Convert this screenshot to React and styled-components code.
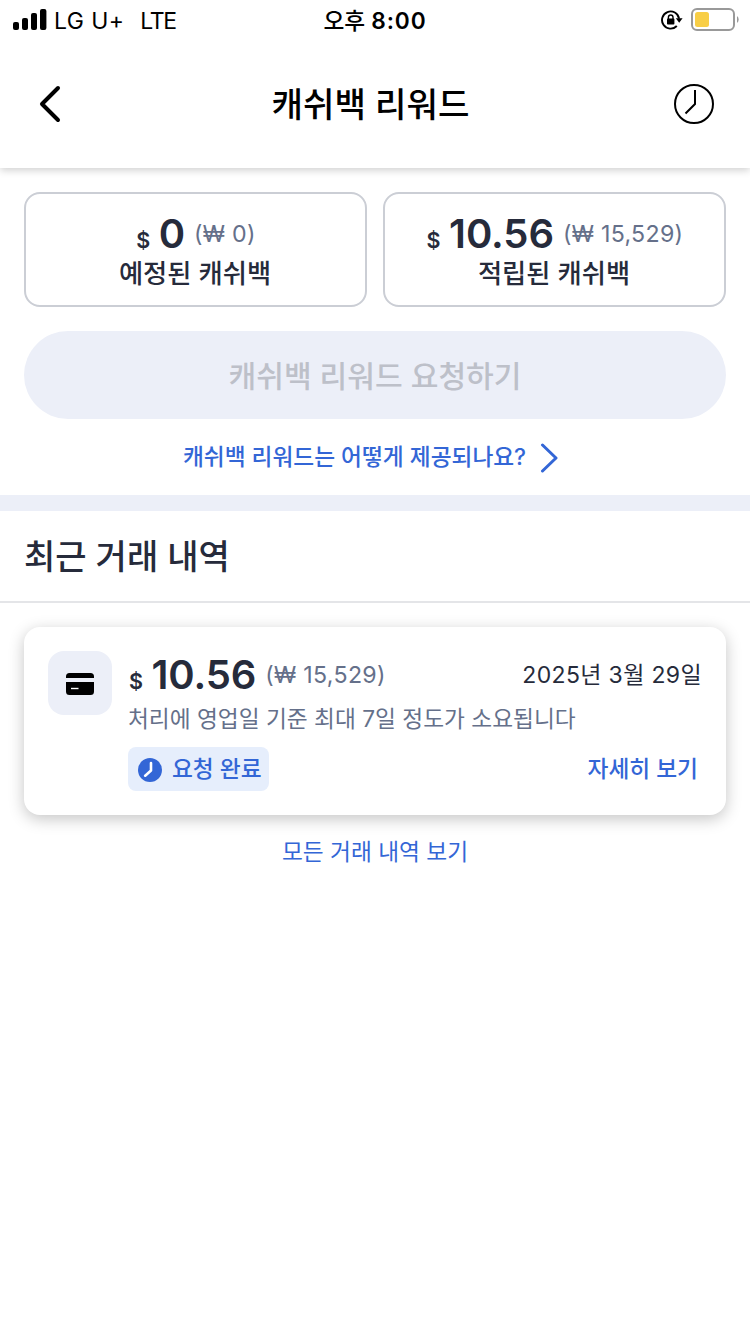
import React from 'react';
import styled, { createGlobalStyle } from 'styled-components';

function App() {
	return (
		<Page>
			<GlobalStyle />

			<StatusBar>
				<Carrier>
					<svg width="34" height="22" viewBox="0 0 34 22">
						<rect x="0" y="13" width="6" height="8" rx="2" />
						<rect x="9" y="9" width="6" height="12" rx="2" />
						<rect x="18" y="4" width="6" height="17" rx="2" />
						<rect x="27" y="0" width="6.4" height="21" rx="2" />
					</svg>
					<span>LG U+</span>
					<span className="network">LTE</span>
				</Carrier>
				<Time>
					오후 <b>8:00</b>
				</Time>
				<Indicators>
					<LockIcon />
					<BatteryIcon />
				</Indicators>
			</StatusBar>

			<Header>
				<IconButton aria-label="뒤로">
					<svg width="24" height="38" viewBox="0 0 24 38">
						<path
							d="M20 3L4 19L20 35"
							fill="none"
							stroke="#000"
							strokeWidth="4"
							strokeLinecap="round"
							strokeLinejoin="round"
						/>
					</svg>
				</IconButton>
				<h1>캐쉬백 리워드</h1>
				<IconButton aria-label="내역">
					<svg width="40" height="40" viewBox="0 0 40 40">
						<g fill="none" stroke="#000" strokeWidth="2">
							<circle cx="20" cy="20" r="19" />
							<path d="M21 6V20L11.5 29.5" />
						</g>
					</svg>
				</IconButton>
			</Header>

			<Summary>
				<Balances>
					<BalanceBox>
						<Amount usd="0" krw="0" />
						<p>예정된 캐쉬백</p>
					</BalanceBox>
					<BalanceBox>
						<Amount usd="10.56" krw="15,529" />
						<p>적립된 캐쉬백</p>
					</BalanceBox>
				</Balances>
				<RequestButton disabled>캐쉬백 리워드 요청하기</RequestButton>
				<HelpLink href="#">
					<span>캐쉬백 리워드는 어떻게 제공되나요?</span>
					<svg width="18" height="30" viewBox="0 0 18 30">
						<path
							d="M2.5 2L16 15L2.5 28"
							fill="none"
							stroke="#3366d6"
							strokeWidth="3"
							strokeLinecap="round"
							strokeLinejoin="round"
						/>
					</svg>
				</HelpLink>
			</Summary>

			<SectionTitle>최근 거래 내역</SectionTitle>

			<Transaction>
				<CardIcon>
					<svg width="28" height="22" viewBox="0 0 28 22">
						<path d="M0 5V3.5A3.5 3.5 0 0 1 3.5 0H24.5A3.5 3.5 0 0 1 28 3.5V5Z" />
						<path d="M0 9H28V18.5A3.5 3.5 0 0 1 24.5 22H3.5A3.5 3.5 0 0 1 0 18.5Z" />
						<path d="M5 15.5H12.5" stroke="#fff" strokeWidth="1.4" />
					</svg>
				</CardIcon>
				<Details>
					<Row>
						<Amount usd="10.56" krw="15,529" />
						<TransactionDate>2025년 3월 29일</TransactionDate>
					</Row>
					<Note>처리에 영업일 기준 최대 7일 정도가 소요됩니다</Note>
					<Row>
						<Badge>
							<svg width="24" height="24" viewBox="0 0 24 24">
								<circle cx="12" cy="12" r="12" fill="#3366d6" />
								<path
									d="M13 5V12.5L7.2 17.7"
									fill="none"
									stroke="#fff"
									strokeWidth="2.6"
									strokeLinecap="round"
									strokeLinejoin="round"
								/>
							</svg>
							<span>요청 완료</span>
						</Badge>
						<MoreLink href="#">자세히 보기</MoreLink>
					</Row>
				</Details>
			</Transaction>

			<AllLink href="#">모든 거래 내역 보기</AllLink>
		</Page>
	);
}

export default App;

function Amount({ usd, krw }) {
	return (
		<AmountLine>
			<span className="sign">$</span>
			<span className="usd">{usd}</span>
			<span className="krw">(₩ {krw})</span>
		</AmountLine>
	);
}

function LockIcon() {
	return (
		<svg width="22" height="20" viewBox="0 0 22 20">
			<path
				d="M15.8 16A8.6 8.6 0 1 1 18.1 8.6"
				fill="none"
				stroke="#000"
				strokeWidth="1.9"
			/>
			<path d="M14.8 8.2H21.6L18.2 12.8Z" />
			<rect x="6" y="8.6" width="7.4" height="6" rx="0.8" />
			<path
				d="M7.4 9V7.3A2.3 2.3 0 0 1 12 7.3V9"
				fill="none"
				stroke="#000"
				strokeWidth="1.4"
			/>
		</svg>
	);
}

function BatteryIcon() {
	return (
		<svg width="48" height="24" viewBox="0 0 48 24">
			<rect
				x="1"
				y="1"
				width="42"
				height="21"
				rx="5"
				fill="none"
				stroke="#999"
				strokeWidth="2"
			/>
			<rect x="4" y="4" width="14" height="15" rx="2.5" fill="#f8ce46" />
			<path d="M46 8A4.5 4.5 0 0 1 46 15Z" fill="#999" />
		</svg>
	);
}

const GlobalStyle = createGlobalStyle`
	* {
		box-sizing: border-box;
	}
	body {
		margin: 0;
		background: #fff;
		color: #262b3b;
		font-family: Inter, 'Noto Sans CJK KR', sans-serif;
	}
	h1, h2, p {
		margin: 0;
	}
	a {
		color: #3366d6;
		text-decoration: none;
	}
	svg {
		display: block;
		flex-shrink: 0;
	}
`;

const Page = styled.div`
	width: 750px;
	min-height: 1334px;
	background: #fff;
`;

const StatusBar = styled.div`
	display: grid;
	grid-template-columns: 1fr auto 1fr;
	height: 40px;
	padding: 0 11px 0 13px;
	color: #000;
`;

const Carrier = styled.div`
	display: flex;
	height: 40px;
	padding-top: 9px;
	font-size: 23px;
	letter-spacing: 0.4px;
	line-height: 24px;
	white-space: nowrap;
	svg {
		margin-right: 7px;
	}
	.network {
		margin-left: 16px;
		letter-spacing: -1.4px;
	}
`;

const Time = styled.div`
	margin-left: -2px;
	padding-top: 9px;
	font-size: 22.7px;
	font-weight: 500;
	line-height: 24px;
	b {
		font-weight: 600;
		letter-spacing: 0.9px;
	}
`;

const Indicators = styled.div`
	display: flex;
	justify-content: flex-end;
	padding-top: 8px;
	svg:first-child {
		margin: 2px 8px 0 0;
	}
`;

const Header = styled.header`
	display: flex;
	align-items: center;
	justify-content: space-between;
	height: 128px;
	padding: 0 36px 0 38px;
	color: #000;
	box-shadow: 0 2px 8px rgba(0, 0, 0, 0.2);
	clip-path: inset(0 0 -16px 0);
	h1 {
		margin-left: -11px;
		padding-top: 1px;
		font-size: 34.2px;
		font-weight: 500;
		line-height: 48px;
	}
`;

const IconButton = styled.button`
	display: flex;
	align-items: center;
	width: 40px;
	height: 40px;
	padding: 0;
	border: 0;
	background: none;
`;

const Summary = styled.section`
	height: 343px;
	padding: 24px 24px 0;
	border-bottom: 16px solid #eceff8;
`;

const Balances = styled.div`
	display: grid;
	grid-template-columns: 1fr 1fr;
	gap: 16px;
`;

const BalanceBox = styled.div`
	display: flex;
	flex-direction: column;
	align-items: center;
	height: 115px;
	padding-top: 16px;
	border: 2px solid #cbced5;
	border-radius: 16px;
	p {
		margin-left: -1px;
		font-size: 26.3px;
		font-weight: 500;
		line-height: 32px;
	}
`;

const AmountLine = styled.div`
	display: flex;
	align-items: baseline;
	height: 48px;
	line-height: 48px;
	white-space: nowrap;
	.sign {
		margin: 0 8.5px 0 1px;
		font-size: 21.5px;
		font-weight: 600;
	}
	.usd {
		margin-right: 9px;
		font-size: 40px;
		font-weight: 600;
		letter-spacing: -0.1px;
	}
	.krw {
		position: relative;
		top: -6px;
		font-size: 23.2px;
		letter-spacing: 0.3px;
		color: #65708a;
	}
`;

const RequestButton = styled.button`
	display: block;
	width: 100%;
	height: 88px;
	margin-top: 24px;
	padding: 0 0 3px;
	border: 0;
	border-radius: 44px;
	background: #eceff8;
	color: #bdc0c9;
	font-family: inherit;
	font-size: 30.1px;
	font-weight: 500;
`;

const HelpLink = styled.a`
	display: flex;
	align-items: center;
	justify-content: center;
	gap: 14px;
	height: 76px;
	padding: 1px 9px 0 0;
	font-size: 22.7px;
	font-weight: 500;
	span {
		padding-bottom: 5px;
	}
`;

const SectionTitle = styled.h2`
	height: 92px;
	padding-left: 24px;
	border-bottom: 2px solid #e4e5e8;
	font-size: 34px;
	font-weight: 500;
	line-height: 91px;
`;

const Transaction = styled.article`
	display: flex;
	height: 188px;
	margin: 24px 24px 0;
	padding: 24px;
	border-radius: 16px;
	background: #fff;
	box-shadow: 0 4px 16px rgba(0, 0, 0, 0.23);
`;

const CardIcon = styled.div`
	display: flex;
	align-items: center;
	justify-content: center;
	width: 64px;
	height: 64px;
	margin-right: 16px;
	padding-top: 2px;
	border-radius: 16px;
	background: #eceff8;
`;

const Details = styled.div`
	flex: 1;
`;

const Row = styled.div`
	display: flex;
	justify-content: space-between;
`;

const TransactionDate = styled.span`
	font-size: 23px;
	letter-spacing: 0.35px;
	line-height: 48px;
`;

const Note = styled.p`
	height: 48px;
	color: #65708a;
	font-size: 22.7px;
	line-height: 40px;
`;

const Badge = styled.div`
	display: flex;
	align-items: center;
	gap: 10px;
	width: 141px;
	height: 44px;
	padding: 2px 0 0 10px;
	border-radius: 8px;
	background: #e6eefc;
	color: #3366d6;
	font-size: 22.7px;
	font-weight: 500;
	span {
		padding-bottom: 6px;
	}
`;

const MoreLink = styled.a`
	padding-right: 4px;
	font-size: 22.7px;
	font-weight: 500;
	line-height: 43px;
`;

const AllLink = styled.a`
	display: block;
	margin-top: 12px;
	font-size: 22.7px;
	line-height: 50px;
	text-align: center;
`;
